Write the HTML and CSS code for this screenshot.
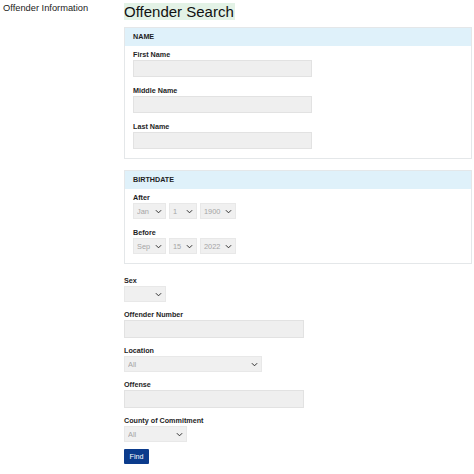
FILE: index.html
```html
<!DOCTYPE html>
<html lang="en">
<head>
<meta charset="utf-8">
<title>Offender Search</title>
<link rel="stylesheet" href="styles.css">
</head>
<body>
<div class="page">
  <aside class="sidebar">Offender Information</aside>
  <main class="main">
    <h1 class="title"><span>Offender Search</span></h1>

    <section class="panel">
      <div class="panel-head">NAME</div>
      <div class="panel-body">
        <div class="field">
          <label class="lbl">First Name</label>
          <input class="txt txt-panel" type="text">
        </div>
        <div class="field">
          <label class="lbl">Middle Name</label>
          <input class="txt txt-panel" type="text">
        </div>
        <div class="field">
          <label class="lbl">Last Name</label>
          <input class="txt txt-panel" type="text">
        </div>
      </div>
    </section>

    <section class="panel">
      <div class="panel-head">BIRTHDATE</div>
      <div class="panel-body">
        <div class="field">
          <label class="lbl">After</label>
          <div class="date-row">
            <span class="sel w-mon"><select><option>Jan</option></select><svg class="chev" viewBox="0 0 8 5"><path d="M1 1 L4 4 L7 1"/></svg></span>
            <span class="sel w-day"><select><option>1</option></select><svg class="chev" viewBox="0 0 8 5"><path d="M1 1 L4 4 L7 1"/></svg></span>
            <span class="sel w-yr"><select><option>1900</option></select><svg class="chev" viewBox="0 0 8 5"><path d="M1 1 L4 4 L7 1"/></svg></span>
          </div>
        </div>
        <div class="field">
          <label class="lbl">Before</label>
          <div class="date-row">
            <span class="sel w-mon"><select><option>Sep</option></select><svg class="chev" viewBox="0 0 8 5"><path d="M1 1 L4 4 L7 1"/></svg></span>
            <span class="sel w-day"><select><option>15</option></select><svg class="chev" viewBox="0 0 8 5"><path d="M1 1 L4 4 L7 1"/></svg></span>
            <span class="sel w-yr"><select><option>2022</option></select><svg class="chev" viewBox="0 0 8 5"><path d="M1 1 L4 4 L7 1"/></svg></span>
          </div>
        </div>
      </div>
    </section>

    <div class="fields">
      <div class="field">
        <label class="lbl">Sex</label>
        <span class="sel w-sex"><select><option></option></select><svg class="chev" viewBox="0 0 8 5"><path d="M1 1 L4 4 L7 1"/></svg></span>
      </div>
      <div class="field">
        <label class="lbl">Offender Number</label>
        <input class="txt txt-free" type="text">
      </div>
      <div class="field">
        <label class="lbl">Location</label>
        <span class="sel w-loc"><select><option>All</option></select><svg class="chev" viewBox="0 0 8 5"><path d="M1 1 L4 4 L7 1"/></svg></span>
      </div>
      <div class="field">
        <label class="lbl">Offense</label>
        <input class="txt txt-free" type="text">
      </div>
      <div class="field">
        <label class="lbl">County of Commitment</label>
        <span class="sel w-cty"><select><option>All</option></select><svg class="chev" viewBox="0 0 8 5"><path d="M1 1 L4 4 L7 1"/></svg></span>
      </div>
      <button class="btn" type="button">Find</button>
    </div>
  </main>
</div>
</body>
</html>
```
FILE: styles.css
```css
html, body {
  margin: 0;
  padding: 0;
  background: #ffffff;
}
body {
  font-family: "Liberation Sans", Arial, sans-serif;
  color: #1e1e1e;
}
.page {
  display: flex;
  align-items: flex-start;
}
.sidebar {
  width: 124px;
  box-sizing: border-box;
  padding: 2px 0 0 3px;
  font-size: 9.3px;
  line-height: 12px;
  color: #222;
}
.main {
  width: 348px;
}
.title {
  margin: 3px 0 7px 0;
  font-size: 15px;
  font-weight: normal;
  line-height: 17px;
  height: 17px;
}
.title span {
  display: inline-block;
  background: #e3f2e6;
  color: #111;
  padding-right: 1px;
}
.panel {
  border: 1px solid #e4e7e9;
  margin-bottom: 11px;
}
.panel-head {
  height: 18px;
  line-height: 18px;
  background: #dff1fa;
  padding-left: 8px;
  font-size: 7.2px;
  font-weight: bold;
  color: #1e1e1e;
}
.panel-body {
  padding: 4px 8px 0 8px;
}
.field {
  display: flex;
  flex-direction: column;
  align-items: flex-start;
  margin-bottom: 9px;
}
.fields {
  padding-top: 1px;
}
.fields .field {
  margin-bottom: 8px;
}
.lbl {
  font-size: 7.2px;
  font-weight: bold;
  line-height: 9px;
  margin-bottom: 1px;
  color: #1e1e1e;
}
.txt {
  display: block;
  box-sizing: border-box;
  height: 17px;
  margin: 0;
  padding: 0 3px;
  border: 1px solid #e2e2e2;
  background: #efefef;
  border-radius: 0;
  outline: none;
}
.txt-panel {
  width: 179px;
}
.txt-free {
  width: 180px;
  height: 18px;
}
.date-row {
  display: flex;
  gap: 3px;
}
.sel {
  position: relative;
  display: block;
  height: 16px;
}
.sel select {
  display: block;
  -webkit-appearance: none;
  appearance: none;
  box-sizing: border-box;
  width: 100%;
  height: 16px;
  margin: 0;
  padding: 0 0 0 3px;
  border: 1px solid #e8e8e8;
  border-radius: 0;
  background: #f0f0f0;
  font-family: "Liberation Sans", Arial, sans-serif;
  font-size: 7.4px;
  color: #a5a5a5;
  outline: none;
}
.sel .chev {
  position: absolute;
  right: 4px;
  top: 6px;
  width: 7px;
  height: 5px;
  fill: none;
  stroke: #2a2a2a;
  stroke-width: 1.1;
  pointer-events: none;
}
.w-mon { width: 33px; }
.w-day { width: 28px; }
.w-yr { width: 36px; }
.w-sex { width: 42px; }
.w-loc { width: 138px; }
.w-cty { width: 63px; }
.btn {
  display: block;
  width: 25px;
  height: 15px;
  margin: -1px 0 0 0;
  padding: 0;
  border: none;
  border-radius: 1px;
  background: #0b3b8c;
  color: #ffffff;
  font-family: "Liberation Sans", Arial, sans-serif;
  font-size: 7.2px;
  line-height: 15px;
  text-align: center;
}
```
